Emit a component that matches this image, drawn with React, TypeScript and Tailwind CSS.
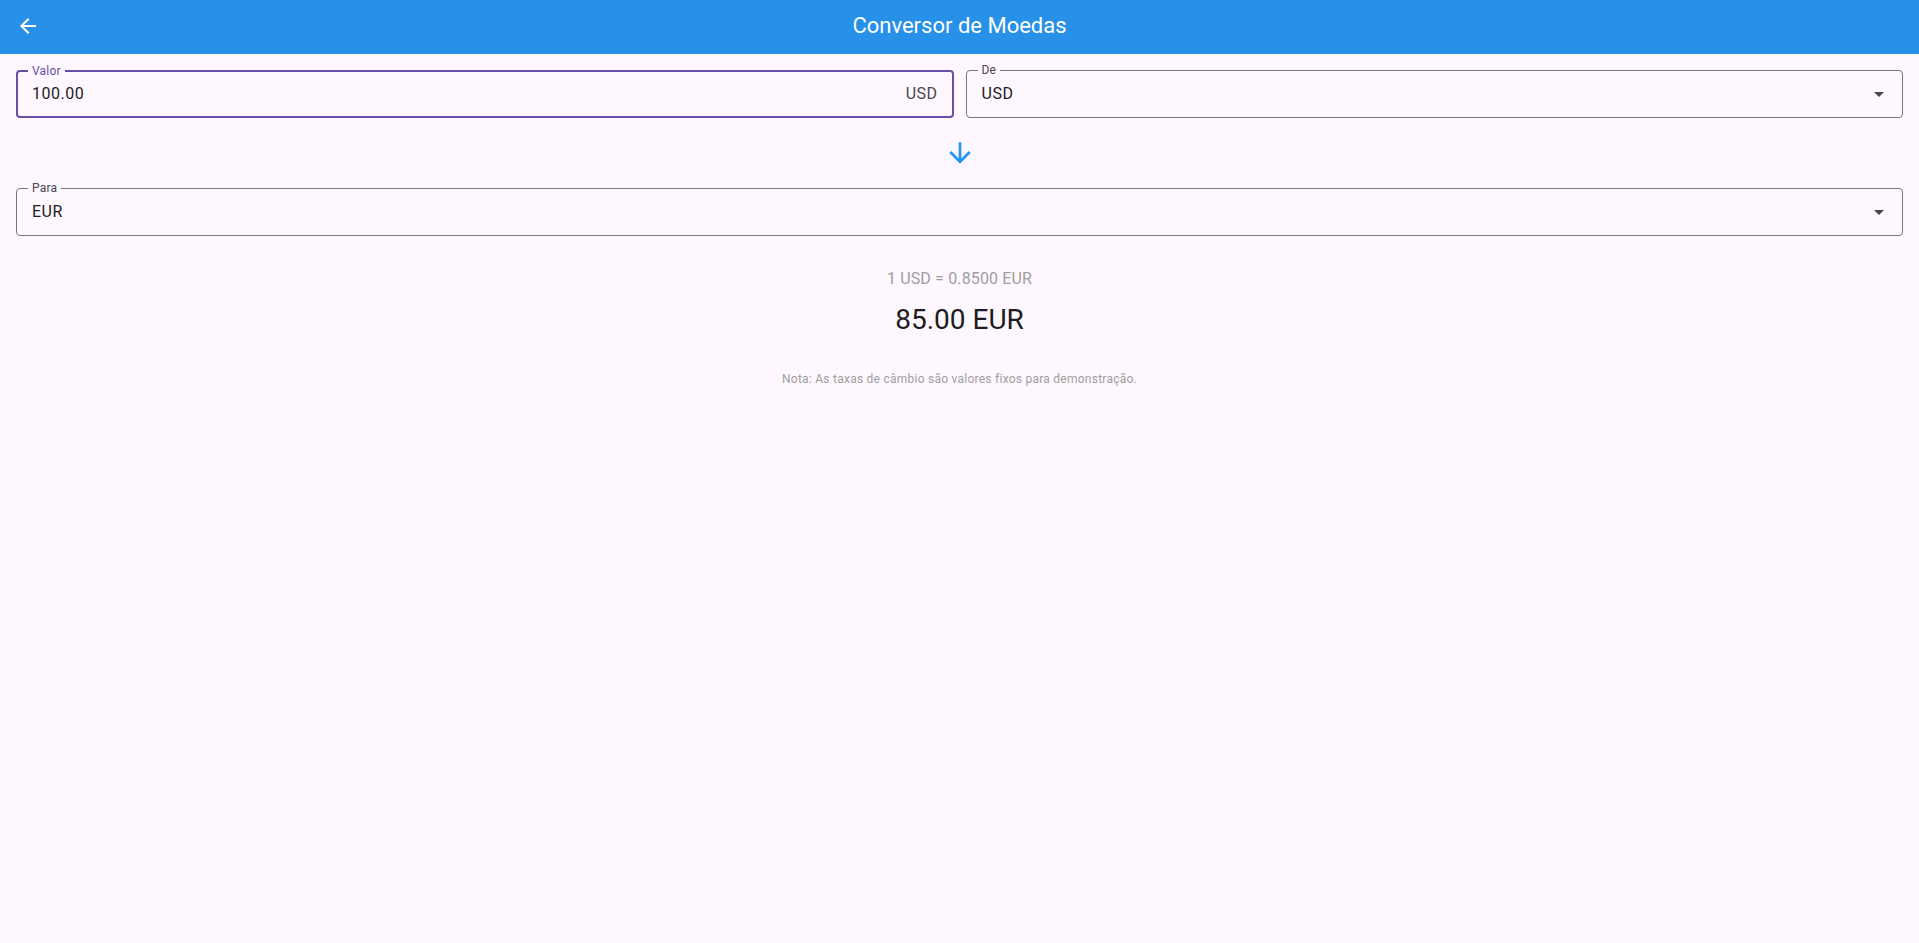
import React from "react";

function OutlinedField({
  label,
  value,
  focused,
  suffix,
  dropdown,
}: {
  label: string;
  value: string;
  focused?: boolean;
  suffix?: string;
  dropdown?: boolean;
}) {
  return (
    <div
      className={
        "relative flex h-[48px] min-w-0 items-center rounded-[4px] " +
        (focused
          ? "border-2 border-[#6750a4] pl-[14px] pr-[14px]"
          : "border border-[#79747e] pl-[15px] pr-[11px]")
      }
    >
      <span
        className={
          "absolute top-[-9px] bg-[#fef7ff] px-[4px] text-[12px] leading-[16px] tracking-[0.2px] " +
          (focused ? "left-[10px] text-[#6750a4]" : "left-[11px] text-[#49454f]")
        }
      >
        {label}
      </span>
      <span className="flex-1 text-[16px] leading-[24px] tracking-[0.5px] text-[#1d1b20]">
        {value}
      </span>
      {suffix && (
        <span className="text-[16px] leading-[24px] tracking-[0.5px] text-[#49454f]">
          {suffix}
        </span>
      )}
      {dropdown && (
        <svg width="24" height="24" viewBox="0 0 24 24" className="fill-[#49454f]">
          <path d="M7 10l5 5 5-5z" />
        </svg>
      )}
    </div>
  );
}

export default function App() {
  return (
    <div
      className="min-h-[943px] w-full bg-[#fef7ff]"
      style={{ fontFamily: "Roboto, 'Noto Sans', sans-serif" }}
    >
      <header className="relative flex h-[54px] items-center bg-[#2790e9] pl-[16px]">
        <svg width="24" height="24" viewBox="0 0 24 24" className="mb-[2px] fill-white">
          <path d="M20 11H7.83l5.59-5.59L12 4l-8 8 8 8 1.41-1.41L7.83 13H20v-2z" />
        </svg>
        <h1 className="pointer-events-none absolute inset-x-0 top-0 flex h-[50px] items-center justify-center text-[22px] font-normal text-white">
          Conversor de Moedas
        </h1>
      </header>
      <main className="flex flex-col px-[16px] pt-[16px]">
        <div className="grid grid-cols-2 gap-[12px]">
          <OutlinedField label="Valor" value="100.00" focused suffix="USD" />
          <OutlinedField label="De" value="USD" dropdown />
        </div>
        <div className="flex justify-center py-[19px]">
          <svg width="32" height="32" viewBox="0 0 24 24" className="fill-[#2196f3]">
            <path d="M20 12l-1.41-1.41L13 16.17V4h-2v12.17l-5.58-5.59L4 12l8 8 8-8z" />
          </svg>
        </div>
        <div className="grid grid-cols-1">
          <OutlinedField label="Para" value="EUR" dropdown />
        </div>
        <div className="mt-[31px] text-center text-[16px] leading-[24px] tracking-[0.15px] text-[#9e9e9e]">
          1 USD = 0.8500 EUR
        </div>
        <div className="mt-[11px] text-center text-[28px] leading-[36px] text-[#1d1b20]">
          85.00 EUR
        </div>
        <div className="mt-[33px] text-center text-[12px] leading-[16px] tracking-[0.25px] text-[#9e9e9e]">
          Nota: As taxas de câmbio são valores fixos para demonstração.
        </div>
      </main>
    </div>
  );
}
